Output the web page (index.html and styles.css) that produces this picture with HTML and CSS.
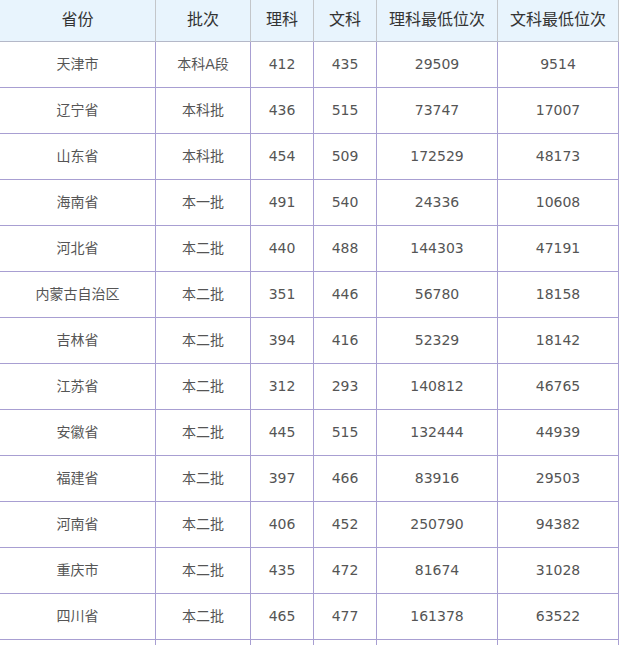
FILE: index.html
```html
<!DOCTYPE html>
<html lang="zh">
<head>
<meta charset="utf-8">
<title>分数线</title>
<link rel="stylesheet" href="styles.css">
</head>
<body>
<table class="score-table">
  <colgroup>
    <col class="c-prov"><col class="c-batch"><col class="c-num"><col class="c-num"><col class="c-rank"><col class="c-rank">
  </colgroup>
  <thead>
    <tr><th>省份</th><th>批次</th><th>理科</th><th>文科</th><th>理科最低位次</th><th>文科最低位次</th></tr>
  </thead>
  <tbody>
    <tr><td>天津市</td><td>本科A段</td><td>412</td><td>435</td><td>29509</td><td>9514</td></tr>
    <tr><td>辽宁省</td><td>本科批</td><td>436</td><td>515</td><td>73747</td><td>17007</td></tr>
    <tr><td>山东省</td><td>本科批</td><td>454</td><td>509</td><td>172529</td><td>48173</td></tr>
    <tr><td>海南省</td><td>本一批</td><td>491</td><td>540</td><td>24336</td><td>10608</td></tr>
    <tr><td>河北省</td><td>本二批</td><td>440</td><td>488</td><td>144303</td><td>47191</td></tr>
    <tr><td>内蒙古自治区</td><td>本二批</td><td>351</td><td>446</td><td>56780</td><td>18158</td></tr>
    <tr><td>吉林省</td><td>本二批</td><td>394</td><td>416</td><td>52329</td><td>18142</td></tr>
    <tr><td>江苏省</td><td>本二批</td><td>312</td><td>293</td><td>140812</td><td>46765</td></tr>
    <tr><td>安徽省</td><td>本二批</td><td>445</td><td>515</td><td>132444</td><td>44939</td></tr>
    <tr><td>福建省</td><td>本二批</td><td>397</td><td>466</td><td>83916</td><td>29503</td></tr>
    <tr><td>河南省</td><td>本二批</td><td>406</td><td>452</td><td>250790</td><td>94382</td></tr>
    <tr><td>重庆市</td><td>本二批</td><td>435</td><td>472</td><td>81674</td><td>31028</td></tr>
    <tr><td>四川省</td><td>本二批</td><td>465</td><td>477</td><td>161378</td><td>63522</td></tr>
    <tr><td>&nbsp;</td><td>&nbsp;</td><td>&nbsp;</td><td>&nbsp;</td><td>&nbsp;</td><td>&nbsp;</td></tr>
  </tbody>
</table>
</body>
</html>
```
FILE: styles.css
```css
html, body {
  margin: 0;
  padding: 0;
  background: #ffffff;
  overflow: hidden;
}

.score-table {
  border-collapse: separate;
  border-spacing: 0;
  table-layout: fixed;
  width: 619px;
  font-family: "DejaVu Sans", "Noto Sans CJK SC", sans-serif;
}

.c-prov { width: 156px; }
.c-batch { width: 95px; }
.c-num { width: 63px; }
.c-rank { width: 121px; }

.score-table th,
.score-table td {
  box-sizing: border-box;
  padding: 0 0 2px 0;
  line-height: 20px;
  text-align: center;
  vertical-align: middle;
  white-space: nowrap;
}

.score-table th {
  height: 42px;
  background: #e8f4fd;
  color: #333333;
  font-size: 16px;
  font-weight: normal;
  border-right: 1px solid #c3c6ca;
  border-bottom: 1px solid #b4b8c8;
}

.score-table td {
  height: 46px;
  color: #555555;
  font-size: 14px;
  border-right: 1px solid #a89fd2;
  border-bottom: 1px solid #a89fd2;
}
```
